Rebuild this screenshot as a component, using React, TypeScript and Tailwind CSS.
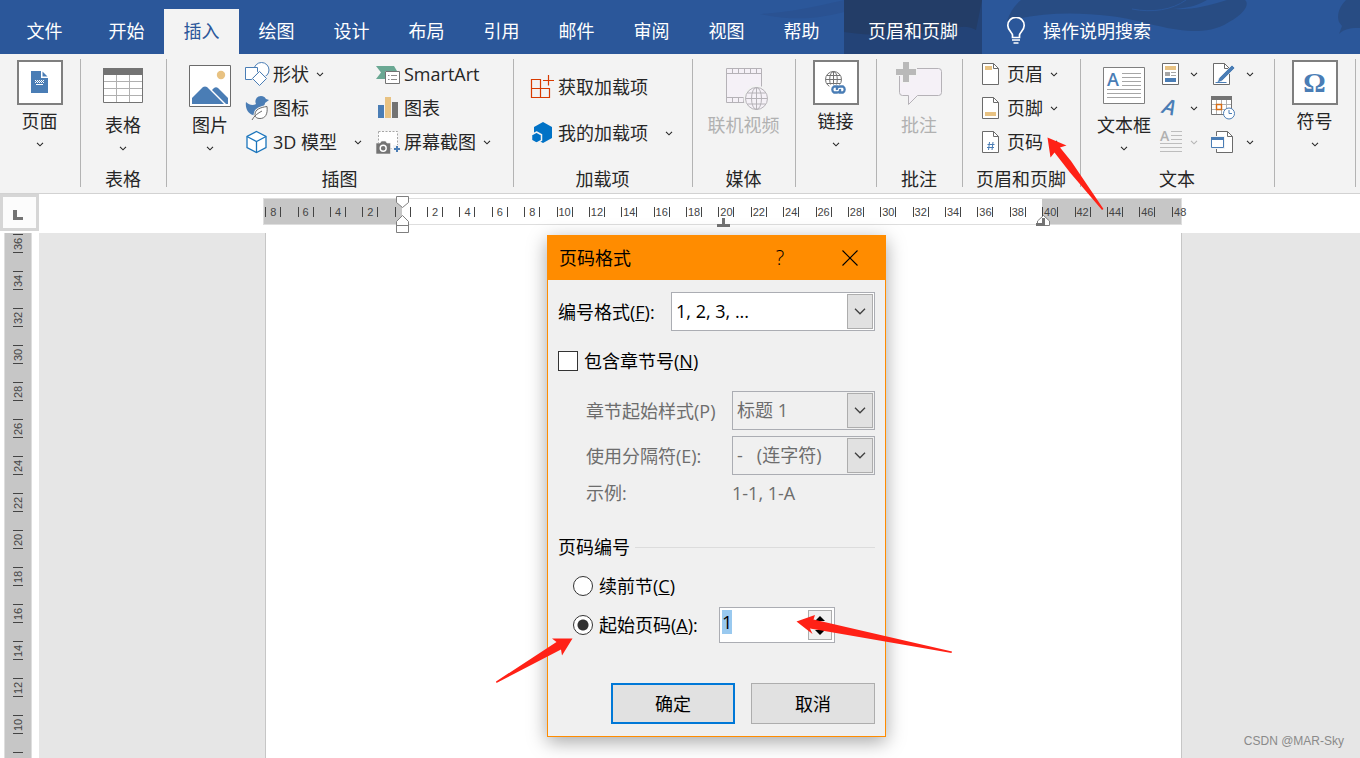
import React, { useEffect, useRef, useState } from 'react';

const tabs = ['开始', '插入', '绘图', '设计', '布局', '引用', '邮件', '审阅', '视图', '帮助'];

const horizontalMarks = Array.from({ length: 29 }, (_, i) => Math.abs(i * 2 - 8));
const verticalMarks = Array.from({ length: 14 }, (_, i) => 36 - i * 2);

interface IconProps {
    children: React.ReactNode;
}

const SmallIcon: React.FC<IconProps> = ({ children }) => (
    <svg viewBox="0 0 26 26" className="w-[26px] h-[26px] shrink-0 overflow-visible" fill="none" aria-hidden="true">{children}</svg>
);

const LargeIcon: React.FC<IconProps> = ({ children }) => (
    <svg viewBox="0 0 48 48" className="w-12 h-12 shrink-0" fill="none" aria-hidden="true">{children}</svg>
);

const Chevron: React.FC<{ className?: string }> = ({ className = 'text-[#262626]' }) => (
    <svg viewBox="0 0 8 5" className={`w-2 h-[5px] shrink-0 ${className}`} fill="none" stroke="currentColor" strokeWidth="1.1" aria-hidden="true">
        <path d="M1 .8l3 3 3-3" />
    </svg>
);

const DocShape: React.FC<IconProps> = ({ children }) => (
    <SmallIcon>
        <path d="M3.5 2.5h11l5 5v16h-16z" fill="#fff" stroke="#6b6b6b" />
        <path d="M14.5 2.5v5h5" stroke="#6b6b6b" />
        {children}
    </SmallIcon>
);

interface GroupProps {
    label?: string;
    width: string;
    children: React.ReactNode;
}

const Group: React.FC<GroupProps> = ({ label, width, children }) => (
    <section className={`relative flex flex-col shrink-0 pr-0.5 ${width} after:absolute after:right-0 after:top-[5px] after:bottom-[6px] after:w-px after:bg-[#b3b3b3]`}>
        <div className="flex flex-1">{children}</div>
        <div className="h-[26px] leading-6 text-center whitespace-nowrap">{label}</div>
    </section>
);

interface BigButtonProps {
    label: string;
    icon: React.ReactNode;
    arrow?: boolean;
    disabled?: boolean;
}

const BigButton: React.FC<BigButtonProps> = ({ label, icon, arrow = true, disabled }) => (
    <button disabled={disabled} className="flex flex-col items-center w-full pt-2 whitespace-nowrap disabled:text-[#b1b1b1]">
        {icon}
        <span className="mt-[3px] leading-6 mb-[9px]">{label}</span>
        {arrow && <Chevron />}
    </button>
);

const FramedButton: React.FC<BigButtonProps> = ({ label, icon }) => (
    <button className="flex flex-col items-center w-full pt-1.5 whitespace-nowrap">
        <span className="w-[46px] h-[45px] bg-white border-2 border-[#7f7f7f] flex items-center justify-center">{icon}</span>
        <span className="mt-1 leading-6 mb-[9px]">{label}</span>
        <Chevron />
    </button>
);

interface RowButtonProps {
    label: string;
    icon: React.ReactNode;
    arrow?: boolean;
    wide?: boolean;
}

const RowButton: React.FC<RowButtonProps> = ({ label, icon, arrow, wide }) => (
    <button className="flex items-center gap-0.5 h-[34px] whitespace-nowrap">
        {icon}
        <span>{label}</span>
        {arrow && <span className={wide ? 'pl-[15px]' : 'pl-[5px]'}><Chevron /></span>}
    </button>
);

const IconButton: React.FC<{ title: string; icon: React.ReactNode; arrow?: boolean; disabled?: boolean }> = ({ title, icon, arrow = true, disabled }) => (
    <button aria-label={title} disabled={disabled} className="flex items-center justify-between w-full h-[34px]">
        {icon}
        {arrow && <Chevron className={disabled ? 'text-[#b5b5b5]' : 'text-[#262626]'} />}
    </button>
);

const TitleBar: React.FC = () => (
    <header className="relative h-[54px] bg-[#2b579a] text-white overflow-hidden shrink-0">
        <svg viewBox="0 0 600 54" className="absolute right-0 top-0 w-[600px] h-[54px]" aria-hidden="true">
            <path d="M0 14c30-2 50-6 84-14v12c-30 8-54 8-84 2z" fill="#2a5292" />
            <path d="M247 21c3-9 8-16 14-21h186c-10 6-20 8-34 9 20 1 34-3 54-9h18c4 3 2 12-16 22-12 8-24 9-36 9-30-1-50-11-83-15-34-4-66-4-103 5z" fill="#284c83" />
            <path d="M372 9c20 4 40 1 54-9" stroke="#2b579a" strokeWidth="1" fill="none" />
            <path d="M586 0c-8 8-9 16-7 22l3 4-3 8c6-6 14-6 21-6V0z" fill="#284c83" />
        </svg>
        <nav className="relative flex h-full items-end whitespace-nowrap">
            <button className="w-[89px] h-[45px] pb-0.5">文件</button>
            {tabs.map(tab => (
                <button key={tab} className={`w-[75px] h-[45px] pb-0.5 ${tab === '插入' ? 'bg-[#f3f3f3] text-[#2b579a]' : ''}`}>{tab}</button>
            ))}
            <button className="relative ml-[5px] w-[138px] h-[54px] pt-[7px] bg-[#234377]">
                <svg viewBox="0 0 138 54" className="absolute inset-0 w-full h-full" aria-hidden="true">
                    <path d="M0 0h138l-6 30c-8-4-14-4-22-1-40 6-76 8-110 3z" fill="#233d67" />
                </svg>
                <span className="relative">页眉和页脚</span>
            </button>
            <button className="flex items-center gap-[17px] h-[45px] pb-0.5 ml-6">
                <svg viewBox="0 0 20 28" className="w-5 h-7" fill="none" stroke="#fff" strokeWidth="1.7" aria-hidden="true">
                    <path d="M6.5 20.5v-2.200c0-3-4.700-4.700-4.700-9.800a8.200 8.200 0 0 1 16.400 0c0 5.100-4.700 6.800-4.700 9.800v2.200z" />
                    <path d="M6 23h8M7.500 26h5" />
                </svg>
                <span>操作说明搜索</span>
            </button>
        </nav>
    </header>
);

const Ribbon: React.FC = () => (
    <div className="flex h-[140px] shrink-0 bg-[#f3f3f3] border-b border-[#d2d2d2] overflow-hidden">
        <Group width="w-[81px]">
            <FramedButton
                label="页面"
                icon={
                    <svg viewBox="0 0 17 22" className="w-[17px] h-[22px] mb-0.5" aria-hidden="true">
                        <path d="M0 0h10v7h7v15H0z" fill="#4a7db5" />
                        <path d="M11.500 .5v5h5z" fill="#4a7db5" />
                        <path d="M4 9.500h9M4 11.500h9" stroke="#fff" strokeDasharray="1 1" />
                        <path d="M5 10.500h8" stroke="#fff" strokeDasharray="1 1" />
                        <path d="M5 13.500h7" stroke="#fff" />
                    </svg>
                }
            />
        </Group>
        <Group label="表格" width="w-[86px]">
            <BigButton
                label="表格"
                icon={
                    <LargeIcon>
                        <path d="M4.500 6.500h39v34h-39z" fill="#fff" stroke="#737373" />
                        <path d="M17.500 13v27M30.500 13v27M5 19.500h38M5 26.500h38M5 33.500h38" stroke="#b0b0b0" />
                        <path d="M4 6h40v7H4z" fill="#737373" />
                    </LargeIcon>
                }
            />
        </Group>
        <Group label="插图" width="w-[347px]">
            <div className="ml-2 w-[70px]">
                <BigButton
                    label="图片"
                    icon={
                        <LargeIcon>
                            <path d="M3.500 3.500h41v41h-41z" fill="#fff" stroke="#6b6b6b" />
                            <circle cx="35" cy="13" r="4.200" fill="#e8c282" />
                            <path d="M6 42v-6l11-11q2-1 4 0l17 17z" fill="#4a7db5" />
                            <path d="M26 28l2-2q2-1.500 4 0l10 10v6h-2z" fill="#4a7db5" />
                        </LargeIcon>
                    }
                />
            </div>
            <div className="flex flex-col w-[131px] pt-[3px]">
                <RowButton
                    label="形状"
                    arrow
                    icon={
                        <SmallIcon>
                            <circle cx="16.500" cy="9" r="7.500" fill="#fff" stroke="#4a7db5" />
                            <path d="M.5 6.500h12v12H.5z" fill="#fff" stroke="#4a7db5" />
                            <path d="M14.500 9l8.500 8.500-8.500 8.500L6 17.500z" fill="#f3f3f3" />
                            <path d="M14.500 10.500l7 7-7 7-7-7z" fill="#fff" stroke="#4a7db5" />
                        </SmallIcon>
                    }
                />
                <RowButton
                    label="图标"
                    icon={
                        <SmallIcon>
                            <path d="M1 7c3 3 7 4 10 2a5.300 5.300 0 1 1 10-5l3 1-4 3c0 3-3 3-3 5 0 5-5 8-9 7-5-1-8-7-7-13z" fill="#4a7db5" />
                            <path d="M22 11.500c1 8-2 12-7 12-3 0-5-1-5-4 0-5 5-7 12-8z" fill="#fff" stroke="#f3f3f3" strokeWidth="3" />
                            <path d="M22 11.500c1 8-2 12-7 12-3 0-5-1-5-4 0-5 5-7 12-8z" fill="#fff" stroke="#6b6b6b" />
                            <path d="M7 25c2-4 6-7 10-9" stroke="#6b6b6b" />
                        </SmallIcon>
                    }
                />
                <RowButton
                    label="3D 模型"
                    arrow
                    wide
                    icon={
                        <SmallIcon>
                            <path d="M11.500 2.500l9.500 5v11l-9.500 5-9.500-5v-11z" fill="#fff" stroke="#1b75bc" strokeWidth="1.300" />
                            <path d="M2 7.500l9.500 5 9.500-5M11.500 12.500v11" stroke="#1b75bc" strokeWidth="1.300" />
                        </SmallIcon>
                    }
                />
            </div>
            <div className="flex flex-col pt-[3px]">
                <RowButton
                    label="SmartArt"
                    icon={
                        <SmallIcon>
                            <path d="M0 5h18l3 5H9v8H0l5-6.500z" fill="#6aa893" />
                            <path d="M9.500 10.500h14v12h-14z" fill="#fff" stroke="#737373" />
                            <path d="M12 14.500h1.500M15 14.500h6M12 18.500h1.500M15 18.500h6" stroke="#8c8c8c" />
                        </SmallIcon>
                    }
                />
                <RowButton
                    label="图表"
                    icon={
                        <SmallIcon>
                            <path d="M2 10h6v13H2z" fill="#4a7db5" />
                            <path d="M9 2h6v21H9z" fill="#e8c282" />
                            <path d="M16 7h6v16h-6z" fill="#737373" />
                        </SmallIcon>
                    }
                />
                <RowButton
                    label="屏幕截图"
                    arrow
                    icon={
                        <SmallIcon>
                            <path d="M2.500 2.500h19v17h-19z" fill="#fff" stroke="#a6a6a6" strokeDasharray="2 1.500" />
                            <path d="M0 14h4l1.500-2h4L11 14h3.500v11H0z" fill="#737373" stroke="#f3f3f3" strokeWidth=".6" />
                            <circle cx="7.200" cy="19.300" r="3" stroke="#fff" strokeWidth="1.400" />
                            <path d="M17 16h8v8h-8z" fill="#f3f3f3" />
                            <path d="M21 17v6M18 20h6" stroke="#4a7db5" strokeWidth="2" />
                        </SmallIcon>
                    }
                />
            </div>
        </Group>
        <Group label="加载项" width="w-[179px]">
            <div className="flex flex-col gap-3 pl-4 pt-4">
                <RowButton
                    label="获取加载项"
                    icon={
                        <SmallIcon>
                            <path d="M1.500 5.500h9v18h-9zM1.500 14.500h18v9h-18z" stroke="#d83b01" strokeWidth="1.200" />
                            <path d="M18.500 1v10.500M13 6.500h11" stroke="#d83b01" strokeWidth="1.200" />
                        </SmallIcon>
                    }
                />
                <RowButton
                    label="我的加载项"
                    arrow
                    wide
                    icon={
                        <SmallIcon>
                            <path d="M13 2l9 5v11l-9 5-9-5V7z" fill="#0072c6" />
                            <path d="M6.500 12l5 2.800v5.600l-5 2.800-5-2.800v-5.600z" fill="#0072c6" stroke="#f3f3f3" strokeWidth="1.500" />
                        </SmallIcon>
                    }
                />
            </div>
        </Group>
        <Group label="媒体" width="w-[103px]">
            <BigButton
                label="联机视频"
                disabled
                arrow={false}
                icon={
                    <LargeIcon>
                        <path d="M6.500 6.500h35v34h-35z" fill="#f5f1f7" stroke="#b5b2b7" />
                        <path d="M6.500 11.500h35M6.500 35.500h35M12.500 7v4M18.500 7v4M24.500 7v4M30.500 7v4M36.500 7v4M12.500 36v4M18.500 36v4M23.500 36v4" stroke="#b5b2b7" />
                        <circle cx="36.500" cy="36.500" r="13" fill="#f3f3f3" />
                        <circle cx="36.500" cy="36.500" r="11" fill="#f5f1f7" stroke="#b5b2b7" />
                        <ellipse cx="36.500" cy="36.500" rx="5" ry="11" stroke="#b5b2b7" />
                        <path d="M36.500 25.500v22M25.500 36.500h22M27.500 31h18M27.500 42h18" stroke="#b5b2b7" />
                    </LargeIcon>
                }
            />
        </Group>
        <Group width="w-[81px]">
            <FramedButton
                label="链接"
                icon={
                    <svg viewBox="0 0 46 45" className="w-[46px] h-[45px] shrink-0" fill="none" aria-hidden="true">
                        <circle cx="20.500" cy="19.500" r="8" stroke="#737373" />
                        <ellipse cx="20.500" cy="19.500" rx="3.800" ry="8" stroke="#737373" />
                        <path d="M20.500 11.500v16M12.500 19.500h16M14 15.500h13M14 23.500h13" stroke="#737373" />
                        <path d="M16 24.500h19v10H18z" fill="#fff" />
                        <path d="M25 26.500h-4a3.500 3.500 0 0 0 0 6h3c2.500 0 3.500-1.500 3-3.500M26 32.500h4a3.500 3.500 0 0 0 0-6h-3c-2.500 0-3.500 1.500-3 3.500" stroke="#4a7db5" strokeWidth="2.300" />
                    </svg>
                }
            />
        </Group>
        <Group label="批注" width="w-[86px]">
            <BigButton
                label="批注"
                disabled
                arrow={false}
                icon={
                    <LargeIcon>
                        <path d="M7.500 6.500h36q3 0 3 3v21q0 3-3 3h-21l-9 9v-9h-6q-3 0-3-3v-21q0-3 3-3z" fill="#f5f1f7" stroke="#b5b2b7" />
                        <path d="M7 0h8v6h7v8h-7v7H7v-7H0V6h7z" fill="#f3f3f3" />
                        <path d="M8 0h6v7h7v6h-7v7H8v-7H1V7h7z" fill="#b9b9b9" />
                    </LargeIcon>
                }
            />
        </Group>
        <Group label="页眉和页脚" width="w-[118px]">
            <div className="flex flex-col pl-4 pt-[3px]">
                <RowButton label="页眉" arrow icon={<DocShape><path d="M6 5h7v4H6z" fill="#e8c282" /></DocShape>} />
                <RowButton label="页脚" arrow icon={<DocShape><path d="M6 17h11v4H6z" fill="#e8c282" /></DocShape>} />
                <RowButton
                    label="页码"
                    arrow
                    icon={<DocShape><path d="M10.500 13l-1 8M14 13l-1 8M8.500 15.500h7M8 18.500h7" stroke="#4a7db5" /></DocShape>}
                />
            </div>
        </Group>
        <Group label="文本" width="w-[194px]">
            <div className="ml-2 w-[70px]">
                <BigButton
                    label="文本框"
                    icon={
                        <LargeIcon>
                            <path d="M3.500 5.500h41v36h-41z" fill="#fff" stroke="#7f7f7f" />
                            <text x="7" y="24" fill="#4a7db5" fontSize="18" fontWeight="600">A</text>
                            <path d="M22 11.500h19M22 15.500h19M22 19.500h19M22 23.500h19M7 27.500h34M7 31.500h34M7 35.500h34" stroke="#a6a6a6" />
                        </LargeIcon>
                    }
                />
            </div>
            <div className="flex flex-col pt-[3px] w-[39px]">
                <IconButton
                    title="文档部件"
                    icon={
                        <SmallIcon>
                            <path d="M3.500 2.500h16v21h-16z" fill="#fff" stroke="#6b6b6b" />
                            <path d="M6 5h11v4H6z" fill="#e8c282" />
                            <path d="M6 11h5v4H6z" fill="#a6a6a6" />
                            <path d="M12 11.500h5M12 14.500h5" stroke="#a6a6a6" />
                            <path d="M6 17h11v4H6z" fill="#4a7db5" />
                        </SmallIcon>
                    }
                />
                <IconButton
                    title="艺术字"
                    icon={
                        <SmallIcon>
                            <text x="4" y="20" fill="#4a7db5" fontSize="21" fontWeight="600" fontStyle="italic" transform="rotate(14 12 13)">A</text>
                        </SmallIcon>
                    }
                />
                <IconButton
                    title="首字下沉"
                    disabled
                    icon={
                        <SmallIcon>
                            <text x="1" y="12" fill="#b0b0b0" fontSize="14" fontWeight="600">A</text>
                            <path d="M12 2.500h11M12 6.500h11M12 10.500h11M1 14.500h22M1 18.500h22M1 22.500h22" stroke="#bdbdbd" />
                        </SmallIcon>
                    }
                />
            </div>
            <div className="flex flex-col pt-[3px] ml-3 w-11">
                <IconButton
                    title="签名行"
                    icon={
                        <DocShape>
                            <path d="M22 4l3 3L12 20l-5 2 2-5z" fill="#4a7db5" stroke="#f3f3f3" strokeWidth=".8" />
                            <path d="M5.500 21.500h11" stroke="#4a7db5" />
                        </DocShape>
                    }
                />
                <IconButton
                    title="日期和时间"
                    arrow={false}
                    icon={
                        <SmallIcon>
                            <path d="M1.500 1.500h20v18h-20z" fill="#fff" stroke="#737373" />
                            <path d="M6.500 5v14M11.500 5v14M16.500 5v14M2 9.500h19M2 14.500h19" stroke="#b0b0b0" />
                            <path d="M1 1h21v4H1z" fill="#737373" />
                            <path d="M6.500 9.500h5v5h-5z" fill="#fff" stroke="#d86b12" strokeWidth="1.400" />
                            <circle cx="19" cy="18.500" r="5.500" fill="#fff" stroke="#4a7db5" />
                            <path d="M19 15v3.500h3" stroke="#4a7db5" />
                        </SmallIcon>
                    }
                />
                <IconButton
                    title="对象"
                    icon={
                        <SmallIcon>
                            <path d="M6.500 2.500h11l5 5v16h-16z" fill="#fff" stroke="#6b6b6b" />
                            <path d="M17.500 2.500v5h5" stroke="#6b6b6b" />
                            <path d="M0 7h15v13H0z" fill="#f3f3f3" />
                            <path d="M1.500 8.500h12v10h-12z" fill="#fff" stroke="#4a7db5" />
                            <path d="M1 8h13v3H1z" fill="#4a7db5" />
                        </SmallIcon>
                    }
                />
            </div>
        </Group>
        <Group width="w-[81px]">
            <FramedButton label="符号" icon={<span className="font-['Liberation_Serif',serif] font-bold text-[28px] leading-8 text-[#4a7db5]">Ω</span>} />
        </Group>
    </div>
);

const HorizontalRuler: React.FC = () => (
    <div className="flex h-[39px] shrink-0 bg-white">
        <button aria-label="左对齐式制表符" className="w-[39px] h-[37px] border-[3px] border-[#d6d6d6] bg-[#fcfcfc] flex items-center justify-center shrink-0">
            <svg viewBox="0 0 10 10" className="w-2.5 h-2.5 mt-1 mr-1" aria-hidden="true"><path d="M0 0h4v7h6v3H0z" fill="#737373" /></svg>
        </button>
        <div className="relative ml-[218px] mt-1 w-[939px] h-7 shrink-0">
            <div className="absolute left-1.5 w-[919px] h-[27px] flex border border-[#dedede]">
                <div className="w-[138px] bg-[#c6c6c6]" />
                <div className="flex-1 bg-white" />
                <div className="w-[139px] bg-[#c6c6c6]" />
            </div>
            <div className="relative h-7 flex items-center text-[11px] text-[#444] font-['Liberation_Sans',sans-serif]">
                {horizontalMarks.map((mark, i) => (
                    <div key={i} className="flex-1 flex justify-center">
                        <span className={`w-4 h-2.5 leading-[10px] flex justify-center border-l border-[#444] ${mark === 48 ? '' : 'border-r'}`}>{mark === 0 ? '' : mark}</span>
                    </div>
                ))}
            </div>
            <svg viewBox="0 0 14 38" className="absolute left-[139px] -top-[2px] w-3.5 h-[38px]" fill="#fff" stroke="#7f7f7f" aria-hidden="true">
                <path d="M.5.500h12v6l-6 5-6-5zM.5 36.500v-11l6-6 6 6v11zM.5 29.500h12" />
            </svg>
            <svg viewBox="0 0 14 10" className="absolute left-[460px] top-5 w-3.5 h-2.5" aria-hidden="true">
                <path d="M5 0h3v6h5v3H0V6h5z" fill="#737373" />
            </svg>
            <svg viewBox="0 0 15 12" className="absolute left-[779px] top-[17px] w-[15px] h-3" aria-hidden="true">
                <path d="M1.500 10.500V6l6-5.500 6 5.500v4.500z" fill="#fff" stroke="#7f7f7f" />
                <path d="M0 8h6V3h3v8H0z" fill="#737373" />
            </svg>
        </div>
    </div>
);

const VerticalRuler: React.FC = () => (
    <div className="ml-1 mr-[7px] w-7 shrink-0 bg-[#c6c6c6] border-x border-[#dedede] overflow-hidden">
        <div className="-mt-2 flex flex-col items-center text-[11px] text-[#444] font-['Liberation_Sans',sans-serif]">
            {verticalMarks.map(mark => (
                <div key={mark} className="h-[37px] shrink-0 flex items-center">
                    <span className="h-[19px] w-2.5 leading-[10px] text-center border-x border-[#444] [writing-mode:vertical-rl] rotate-180">{mark}</span>
                </div>
            ))}
            <div className="mt-[9px] w-2.5 h-px bg-[#444] shrink-0" />
        </div>
    </div>
);

interface ComboProps {
    id: string;
    options: string[];
    disabled?: boolean;
    className: string;
}

const Combo: React.FC<ComboProps> = ({ id, options, disabled, className }) => (
    <div className={`relative h-[39px] ${className}`}>
        <select
            id={id}
            disabled={disabled}
            className="appearance-none w-full h-full pl-1 pr-8 pb-0.5 border border-[#abadb3] bg-white text-black rounded-none disabled:bg-[#f0f0f0] disabled:text-[#6d6d6d] disabled:opacity-100"
        >
            {options.map(o => <option key={o}>{o}</option>)}
        </select>
        <span className="pointer-events-none absolute right-0.5 top-0.5 bottom-0.5 w-[26px] border border-[#adadad] bg-[#e1e1e1] flex items-center justify-center">
            <svg viewBox="0 0 12 7" className="w-3 h-[7px]" fill="none" stroke="#404040" strokeWidth="1.300" aria-hidden="true"><path d="M1 .8l5 5 5-5" /></svg>
        </span>
    </div>
);

const radioClass = "appearance-none w-5 h-5 shrink-0 rounded-full border border-[#333] bg-white checked:bg-[radial-gradient(circle,#333_0_5px,#fff_6px)]";

const PageNumberDialog: React.FC = () => {
    const [includeChapter, setIncludeChapter] = useState(false);
    const [mode, setMode] = useState<'continue' | 'start'>('start');
    const [startAt, setStartAt] = useState('1');
    const startRef = useRef<HTMLInputElement>(null);

    useEffect(() => {
        startRef.current?.focus();
        startRef.current?.select();
    }, []);

    const step = (delta: number) => setStartAt(v => String(Math.max(0, (parseInt(v, 10) || 0) + delta)));

    return (
        <div role="dialog" aria-label="页码格式" className="absolute left-[547px] top-[235px] w-[339px] border border-[#ff8c00] bg-[#f0f0f0] text-black whitespace-nowrap shadow-[0_5px_18px_rgba(0,0,0,0.35)]">
            <div className="flex items-center h-11 pl-[11px] bg-[#ff8c00]">
                <h2 className="flex-1">页码格式</h2>
                <button aria-label="帮助" className="w-[70px] h-full text-xl font-light">?</button>
                <button aria-label="关闭" className="w-[70px] h-full flex items-center justify-center">
                    <svg viewBox="0 0 16 16" className="w-4 h-4" stroke="#000" strokeWidth="1.100" aria-hidden="true"><path d="M.5.500l15 15M15.500.500l-15 15" /></svg>
                </button>
            </div>
            <div className="px-2.5 pt-3 pb-3">
                <div className="flex items-center justify-between">
                    <label htmlFor="number-format">编号格式(<u>F</u>):</label>
                    <Combo id="number-format" options={['1, 2, 3, ...', 'a, b, c, ...', 'i, ii, iii, ...']} className="w-[204px]" />
                </div>
                <label className="flex items-center gap-1.5 h-5 my-5">
                    <input
                        type="checkbox"
                        checked={includeChapter}
                        onChange={e => setIncludeChapter(e.target.checked)}
                        className="appearance-none w-5 h-5 border border-[#333] bg-white checked:bg-[#333]"
                    />
                    <span>包含章节号(<u>N</u>)</span>
                </label>
                <div className="pl-7 text-[#6d6d6d] flex flex-col gap-1.5">
                    <div className="flex items-center justify-between">
                        <label htmlFor="chapter-style">章节起始样式(P)</label>
                        <Combo id="chapter-style" options={['标题 1', '标题 2']} disabled={!includeChapter} className="w-[143px]" />
                    </div>
                    <div className="flex items-center justify-between">
                        <label htmlFor="separator">使用分隔符(E):</label>
                        <Combo id="separator" options={['-\u00a0\u00a0 (连字符)', '.\u00a0\u00a0 (句点)']} disabled={!includeChapter} className="w-[143px]" />
                    </div>
                    <div className="flex justify-between h-6 leading-6">
                        <span>示例:</span>
                        <span className="w-[143px]">1-1, 1-A</span>
                    </div>
                </div>
                <fieldset className="mt-[30px]">
                    <legend className="w-full flex items-center gap-[5px] h-6">
                        页码编号
                        <span className="flex-1 h-px bg-[#dcdcdc]" />
                    </legend>
                    <label className="flex items-center gap-1.5 h-6 ml-[15px] mt-[15px]">
                        <input type="radio" name="numbering" checked={mode === 'continue'} onChange={() => setMode('continue')} className={radioClass} />
                        <span>续前节(<u>C</u>)</span>
                    </label>
                    <div className="flex items-center justify-between ml-[15px] mr-10 mt-[9px] h-9">
                        <label className="flex items-center gap-1.5">
                            <input type="radio" name="numbering" checked={mode === 'start'} onChange={() => setMode('start')} className={radioClass} />
                            <span>起始页码(<u>A</u>):</span>
                        </label>
                        <div className="flex w-[116px] h-9 p-0.5 bg-white border border-[#abadb3]">
                            <input
                                ref={startRef}
                                aria-label="起始页码"
                                value={startAt}
                                onChange={e => setStartAt(e.target.value)}
                                className="min-w-0 flex-1 h-6 leading-6 outline-none selection:bg-[#99c9ef] selection:text-black"
                            />
                            <div className="flex flex-col w-6 border border-[#adadad] bg-[#f0f0f0]">
                                <button aria-label="增加" onClick={() => step(1)} className="flex-1 flex items-center justify-center">
                                    <svg viewBox="0 0 10 5" className="w-2.5 h-[5px]" aria-hidden="true"><path d="M0 5l5-5 5 5z" /></svg>
                                </button>
                                <button aria-label="减少" onClick={() => step(-1)} className="flex-1 flex items-center justify-center">
                                    <svg viewBox="0 0 10 5" className="w-2.5 h-[5px]" aria-hidden="true"><path d="M0 0l5 5 5-5z" /></svg>
                                </button>
                            </div>
                        </div>
                    </div>
                </fieldset>
                <div className="flex justify-end gap-4 mt-10">
                    <button className="w-[124px] h-[41px] bg-[#e1e1e1] border-2 border-[#0078d7]">确定</button>
                    <button className="w-[124px] h-[41px] bg-[#e1e1e1] border border-[#adadad]">取消</button>
                </div>
            </div>
        </div>
    );
};

// Red pointers drawn over the ribbon and the dialog
const Pointers: React.FC = () => (
    <svg viewBox="0 0 1360 758" className="pointer-events-none absolute left-0 top-0 w-[1360px] h-[758px]" fill="#ff2116" aria-hidden="true">
        <path d="M1047.500 137.500L1066.500 145.500L1060 147.500L1071 161L1103.500 209L1102 210L1070 172.500L1054.500 152.500L1050.500 157.500Z" />
        <path d="M572.500 638.500L552 638.500L556.500 642L496 681.500L496.500 683L561 649.500L562 655.500Z" />
        <path d="M796.500 621.500L815 615L813.500 619.500L952 651.500L951.500 653L810 628.500L812.500 634Z" />
    </svg>
);

const App: React.FC = () => {
    return (
        <div className="relative h-screen flex flex-col overflow-hidden bg-white text-[18px] leading-6 text-[#262626] font-['Open_Sans','Noto_Sans_CJK_SC',sans-serif]">
            <TitleBar />
            <Ribbon />
            <HorizontalRuler />
            <main className="flex flex-1 min-h-0">
                <VerticalRuler />
                <div className="flex flex-1 bg-[#e6e6e6]">
                    <div className="ml-[226px] w-[917px] shrink-0 bg-white border-x border-[#c6c6c6]" />
                </div>
            </main>
            <PageNumberDialog />
            <Pointers />
            <div className="absolute right-4 bottom-2 text-xs leading-[18px] text-[#8a8a8a] font-['Liberation_Sans',sans-serif]">CSDN @MAR-Sky</div>
        </div>
    );
};

export default App;
